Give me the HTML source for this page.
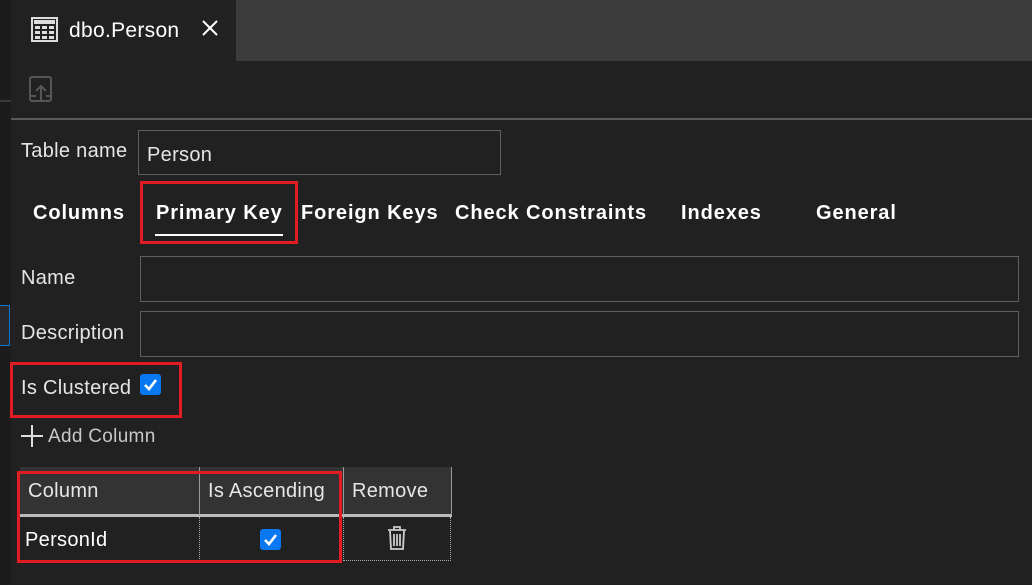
<!DOCTYPE html>
<html><head><style>
body{margin:0;width:1032px;height:585px;background:#212121;font-family:"Segoe UI","Liberation Sans",sans-serif;color:#e6e6e6;position:relative;overflow:hidden}
.a{position:absolute}
.t{position:absolute;font-size:20px;white-space:nowrap;letter-spacing:0.3px}
.in{position:absolute;border:1px solid #5f5f5f;background:#212121;box-sizing:border-box}
.red{position:absolute;border:3px solid #e31c23;box-sizing:border-box}
.tab{position:absolute;font-size:20px;font-weight:bold;top:202px;color:#fff;letter-spacing:0.9px;white-space:nowrap}
.cb{position:absolute;width:21px;height:21px;background:#0a78f0;border-radius:3px}
</style></head><body>
<div class="a" style="left:0;top:0;width:1032px;height:61px;background:#2a2a2a"></div>
<div class="a" style="left:236px;top:0;width:796px;height:61px;background:#3b3b3b"></div>
<div class="a" style="left:11px;top:0;width:225px;height:61px;background:#212121"></div>
<div class="a" style="left:0;top:0;width:11px;height:585px;background:#1c1c1c"></div>
<div class="a" style="left:0;top:100px;width:11px;height:2px;background:#3a3a3a"></div>
<div class="a" style="left:0;top:305px;width:10px;height:41px;border:1px solid #0a78d4;box-sizing:border-box;border-left:none;background:#2a2a2d"></div>
<svg class="a" style="left:31px;top:17px" width="27" height="25" viewBox="0 0 27 25"><rect x="1" y="1" width="25" height="23" fill="none" stroke="#ddd" stroke-width="2"/><rect x="3" y="3" width="21" height="4" fill="#ddd"/><g fill="#ddd"><rect x="4" y="9" width="5" height="3"/><rect x="11" y="9" width="5" height="3"/><rect x="18" y="9" width="5" height="3"/><rect x="4" y="14" width="5" height="3"/><rect x="11" y="14" width="5" height="3"/><rect x="18" y="14" width="5" height="3"/><rect x="4" y="19" width="5" height="3"/><rect x="11" y="19" width="5" height="3"/><rect x="18" y="19" width="5" height="3"/></g></svg>
<div class="t" style="left:69px;top:19px;font-size:21px;color:#fff">dbo.Person</div>
<svg class="a" style="left:202px;top:20px" width="16" height="16"><path d="M1 1L15 15M15 1L1 15" stroke="#fff" stroke-width="2"/></svg>
<svg class="a" style="left:29px;top:76px" width="24" height="27" viewBox="0 0 24 27"><rect x="1" y="1" width="21" height="24" rx="2" fill="none" stroke="#555" stroke-width="2"/><path d="M12 24V10M7 15l5-5 5 5M2 20h5M17 20h5" stroke="#555" stroke-width="2" fill="none"/></svg>
<div class="a" style="left:11px;top:118px;width:1021px;height:2px;background:#5a5a5a"></div>
<div class="t" style="left:21px;top:140px">Table name</div>
<div class="in" style="left:138px;top:130px;width:363px;height:45px"></div>
<div class="t" style="left:147px;top:144px">Person</div>
<div class="tab" style="left:33px">Columns</div>
<div class="tab" style="left:156px">Primary Key</div>
<div class="a" style="left:155px;top:234px;width:128px;height:2px;background:#fff"></div>
<div class="red" style="left:140px;top:181px;width:158px;height:63px"></div>
<div class="tab" style="left:301px">Foreign Keys</div>
<div class="tab" style="left:455px">Check Constraints</div>
<div class="tab" style="left:681px">Indexes</div>
<div class="tab" style="left:816px">General</div>
<div class="t" style="left:21px;top:267px">Name</div>
<div class="in" style="left:140px;top:256px;width:879px;height:46px"></div>
<div class="t" style="left:21px;top:322px">Description</div>
<div class="in" style="left:140px;top:311px;width:879px;height:46px"></div>
<div class="t" style="left:21px;top:377px">Is Clustered</div>
<div class="cb" style="left:140px;top:374px"></div>
<svg class="a" style="left:140px;top:374px" width="21" height="21"><path d="M5 11l4 4 7-9" stroke="#fff" stroke-width="2.6" fill="none"/></svg>
<div class="red" style="left:10px;top:362px;width:172px;height:56px"></div>
<svg class="a" style="left:20px;top:424px" width="24" height="24"><path d="M12 1V23M1 12H23" stroke="#ddd" stroke-width="2"/></svg>
<div class="t" style="left:48px;top:426px;font-size:19px;color:#c8c8c8">Add Column</div>
<div class="a" style="left:20px;top:467px;width:432px;height:48px;background:#333"></div>
<div class="a" style="left:20px;top:514px;width:432px;height:3px;background:#bbb"></div>
<div class="a" style="left:199px;top:467px;width:1px;height:48px;background:#999"></div>
<div class="a" style="left:343px;top:467px;width:1px;height:48px;background:#999"></div>
<div class="a" style="left:451px;top:467px;width:1px;height:48px;background:#999"></div>
<div class="a" style="left:199px;top:517px;width:0;height:44px;border-left:1px dotted #aaa"></div>
<div class="a" style="left:343px;top:517px;width:108px;height:44px;border:1px dotted #aaa;border-top:none;box-sizing:border-box"></div>
<div class="t" style="left:28px;top:480px">Column</div>
<div class="t" style="left:208px;top:480px">Is Ascending</div>
<div class="t" style="left:352px;top:480px">Remove</div>
<div class="t" style="left:25px;top:529px;color:#fff">PersonId</div>
<div class="cb" style="left:260px;top:529px"></div>
<svg class="a" style="left:260px;top:529px" width="21" height="21"><path d="M5 11l4 4 7-9" stroke="#fff" stroke-width="2.6" fill="none"/></svg>
<svg class="a" style="left:386px;top:526px" width="22" height="24" viewBox="0 0 22 24"><path d="M2 4H20M8 4V1H14V4M4 5L5 23H17L18 5M8 8V20M11 8V20M14 8V20" stroke="#ccc" stroke-width="1.8" fill="none"/></svg>
<div class="red" style="left:17px;top:471px;width:325px;height:92px"></div>
</body></html>
